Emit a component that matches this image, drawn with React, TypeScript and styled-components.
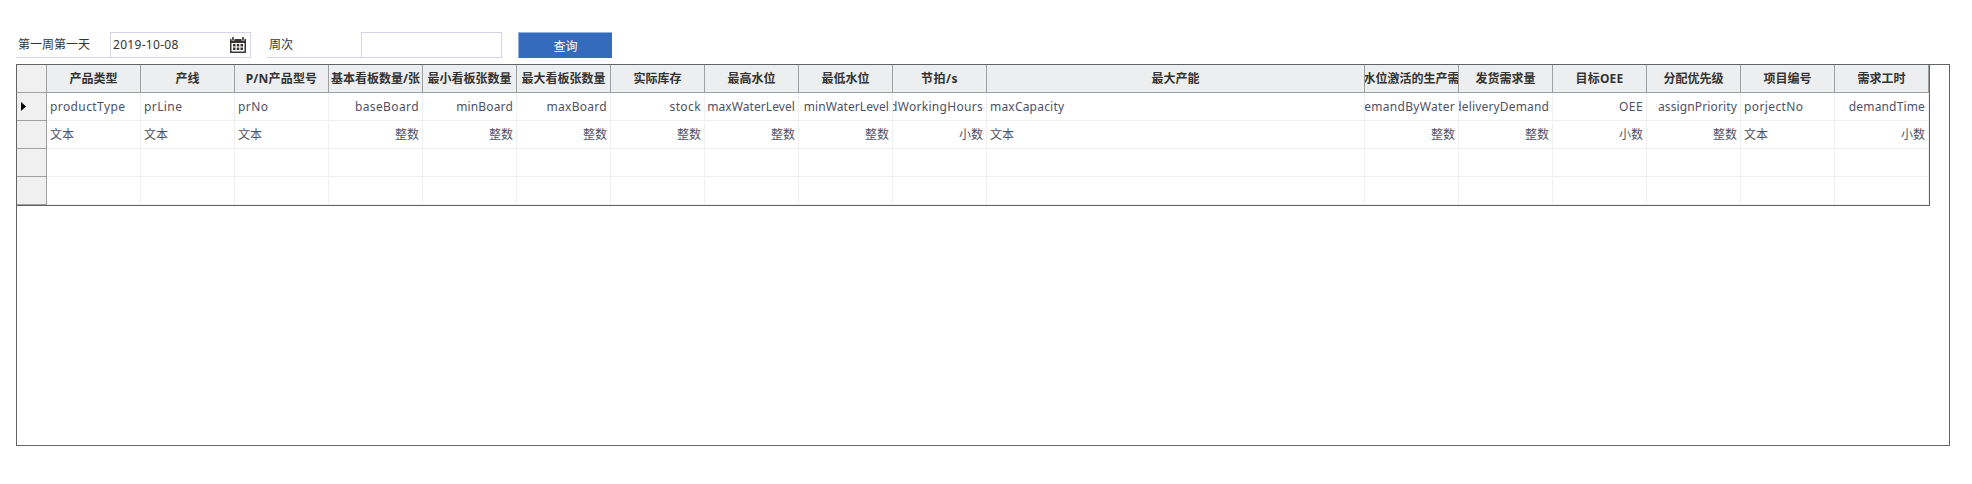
import React from "react";
import styled, { createGlobalStyle } from "styled-components";

const Global = createGlobalStyle`
  body { margin: 0; background: #fff; }
  * { box-sizing: border-box; }
`;

const Page = styled.main`
  width: 1972px;
  height: 484px;
  padding: 32px 22px 0 16px;
  background: #fff;
  color: #333;
  font: 12px/16px "Noto Sans", "Noto Sans CJK SC", sans-serif;
`;

const Toolbar = styled.form`
  display: flex;
  height: 26px;
  margin: 0 0 6px;
`;

const Field = styled.div`
  display: flex;
  width: 235px;
  margin-right: 16px;
`;

const Label = styled.label`
  display: flex;
  align-items: center;
  width: 94px;
  padding-left: 2px;
  border-bottom: 1px solid #d5d3e6;
`;

const InputBox = styled.div`
  display: flex;
  align-items: center;
  justify-content: space-between;
  width: 141px;
  padding: 0 4px 0 2px;
  border: 1px solid #d5d3e6;
`;

const QueryButton = styled.button`
  width: 94px;
  height: 26px;
  padding: 2px 0 0;
  border: 0 solid #8fb0e0;
  border-width: 1px 0 0 1px;
  background: #356bbd;
  color: #fff;
  font: inherit;
`;

const Latin = styled.span<{ $spacing?: number }>`
  letter-spacing: ${(p) => p.$spacing ?? 0.4}px;
`;

const Panel = styled.section`
  width: 1934px;
  height: 382px;
  border: 1px solid #636466;
`;

const Grid = styled.div`
  display: grid;
  grid-template-columns: 30px repeat(10, 94px) 378px repeat(6, 94px);
  grid-auto-rows: 28px;
  width: 1913px;
  border: solid #636466;
  border-width: 0 1px 1px 0;
`;

const Cell = styled.div<{ $right?: boolean }>`
  display: flex;
  align-items: center;
  justify-content: ${(p) => (p.$right ? "flex-end" : "flex-start")};
  min-width: 0;
  overflow: hidden;
  padding: 0 3px;
  border: solid #efefef;
  border-width: 0 1px 1px 0;
  color: #4d5166;
  white-space: nowrap;
`;

const HeadCell = styled(Cell)<{ $spacing?: number }>`
  justify-content: center;
  padding: 0;
  border-color: #a0a0a0;
  background: #edeef0;
  color: #333;
  font-weight: 700;
  letter-spacing: ${(p) => p.$spacing ?? 0}px;
`;

const RowHead = styled(Cell)`
  padding: 0 0 0 4px;
  border-color: #a0a0a0;
  background: #f0f0f0;
`;

type Column = {
  title: string;
  field: string;
  type: string;
  spacing?: number;
  titleSpacing?: number;
};

const columns: Column[] = [
  { title: "产品类型", field: "productType", type: "文本" },
  { title: "产线", field: "prLine", type: "文本" },
  { title: "P/N产品型号", field: "prNo", type: "文本", titleSpacing: 0.2 },
  { title: "基本看板数量/张", field: "baseBoard", type: "整数" },
  { title: "最小看板张数量", field: "minBoard", type: "整数", spacing: 0.15 },
  { title: "最大看板张数量", field: "maxBoard", type: "整数", spacing: 0.28 },
  { title: "实际库存", field: "stock", type: "整数" },
  { title: "最高水位", field: "maxWaterLevel", type: "整数", spacing: 0.08 },
  { title: "最低水位", field: "minWaterLevel", type: "整数", spacing: 0.08 },
  { title: "节拍/s", field: "dWorkingHours", type: "小数", spacing: 0.3, titleSpacing: 0.5 },
  { title: "最大产能", field: "maxCapacity", type: "文本", spacing: 0.2 },
  { title: "水位激活的生产需", field: "emandByWater", type: "整数", spacing: 0.3 },
  { title: "发货需求量", field: "deliveryDemand", type: "整数", spacing: 0.15 },
  { title: "目标OEE", field: "OEE", type: "小数", titleSpacing: 0.2 },
  { title: "分配优先级", field: "assignPriority", type: "整数", spacing: 0.13 },
  { title: "项目编号", field: "porjectNo", type: "文本" },
  { title: "需求工时", field: "demandTime", type: "小数", spacing: 0.15 },
];

const isNumeric = (c: Column) => c.type !== "文本";

const CalendarIcon = () => (
  <svg width="16" height="16" viewBox="0 0 16 16" fill="#3a3434">
    <path d="M0 2h1.500v1.500h3V2h7v1.500h3V2H16v14H0zM1.500 6v8.500h13V6z" fillRule="evenodd" />
    <path d="M2.200 0h1.600v3H2.200zM12.200 0h1.600v3h-1.600z" />
    <path d="M3 7h2.500v2.500H3zm3.750 0h2.500v2.500h-2.500zm3.750 0H13v2.500h-2.500zM3 10.500h2.500V13H3zm3.750 0h2.500V13h-2.500zm3.750 0H13V13h-2.500z" />
  </svg>
);

export default function App() {
  return (
    <Page>
      <Global />
      <Toolbar>
        <Field>
          <Label>第一周第一天</Label>
          <InputBox>
            <Latin $spacing={0.3}>2019-10-08</Latin>
            <CalendarIcon />
          </InputBox>
        </Field>
        <Field>
          <Label>周次</Label>
          <InputBox />
        </Field>
        <QueryButton type="button">查询</QueryButton>
      </Toolbar>
      <Panel>
        <Grid>
          <RowHead />
          {columns.map((c) => (
            <HeadCell key={c.field} $spacing={c.titleSpacing}>{c.title}</HeadCell>
          ))}
          <RowHead>
            <svg width="5" height="9" viewBox="0 0 5 9">
              <path d="M0 0l5 4.500L0 9z" fill="#000" />
            </svg>
          </RowHead>
          {columns.map((c) => (
            <Cell key={c.field} $right={isNumeric(c)}>
              <Latin $spacing={c.spacing}>{c.field}</Latin>
            </Cell>
          ))}
          <RowHead />
          {columns.map((c) => (
            <Cell key={c.field} $right={isNumeric(c)}>{c.type}</Cell>
          ))}
          {[0, 1].map((row) => (
            <React.Fragment key={row}>
              <RowHead />
              {columns.map((c) => (
                <Cell key={c.field} />
              ))}
            </React.Fragment>
          ))}
        </Grid>
      </Panel>
    </Page>
  );
}
